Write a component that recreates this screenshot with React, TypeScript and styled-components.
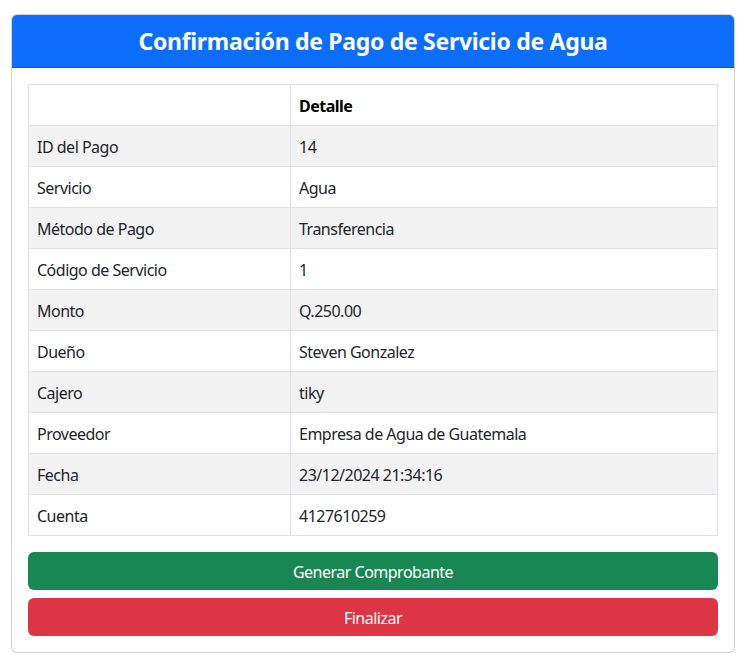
import React from "react";
import styled, { createGlobalStyle } from "styled-components";

const Global = createGlobalStyle`
  html, body { margin: 0; padding: 0; background: #fff; }
  body {
    font-family: "Noto Sans", "Open Sans", sans-serif;
    font-size: 16px;
    line-height: 1.5;
    color: #212529;
    letter-spacing: -0.5px;
  }
  * { box-sizing: border-box; }
`;

const Page = styled.div`
  padding: 14px 10px 10px 11px;
`;

const Card = styled.div`
  width: 724px;
  border: 1px solid rgba(0, 0, 0, 0.175);
  border-radius: 6px;
  overflow: hidden;
  background: #fff;
`;

const Header = styled.div`
  background: #0d6efd;
  color: #fff;
  text-align: center;
  height: 53px;
  display: flex;
  align-items: center;
  justify-content: center;
  padding-top: 2px;
  border-bottom: 1px solid rgba(0, 0, 0, 0.175);
`;

const Title = styled.h3`
  margin: 0;
  font-size: 23px;
  font-weight: 700;
  line-height: 1.2;
  letter-spacing: -0.3px;
`;

const Body = styled.div`
  padding: 16px;
  display: flex;
  flex-direction: column;
`;

const Table = styled.table`
  width: 100%;
  border-collapse: collapse;
  margin-bottom: 16px;
`;

const Row = styled.tr<{ $striped?: boolean }>`
  background: ${(p) => (p.$striped ? "#f2f2f2" : "#fff")};
`;

const Cell = styled.td<{ $head?: boolean }>`
  border: 1px solid #dee2e6;
  padding: 9px 8px 7px;
  height: 41px;
  font-weight: ${(p) => (p.$head ? 700 : 400)};
  color: ${(p) => (p.$head ? "#000" : "#212529")};
  &:first-child { width: 262px; }
`;

const Button = styled.button<{ $color: string }>`
  width: 100%;
  height: 38px;
  border: none;
  border-radius: 6px;
  background: ${(p) => p.$color};
  color: #fff;
  font-family: inherit;
  font-size: 16px;
  letter-spacing: -0.5px;
  padding-top: 2px;
  cursor: pointer;
  & + & { margin-top: 8px; }
`;

const rows: [string, string][] = [
  ["ID del Pago", "14"],
  ["Servicio", "Agua"],
  ["Método de Pago", "Transferencia"],
  ["Código de Servicio", "1"],
  ["Monto", "Q.250.00"],
  ["Dueño", "Steven Gonzalez"],
  ["Cajero", "tiky"],
  ["Proveedor", "Empresa de Agua de Guatemala"],
  ["Fecha", "23/12/2024 21:34:16"],
  ["Cuenta", "4127610259"],
];

export default function App() {
  return (
    <>
      <Global />
      <Page>
        <Card>
          <Header>
            <Title>Confirmación de Pago de Servicio de Agua</Title>
          </Header>
          <Body>
            <Table>
              <tbody>
                <Row>
                  <Cell $head></Cell>
                  <Cell $head>Detalle</Cell>
                </Row>
                {rows.map(([k, v], i) => (
                  <Row key={k} $striped={i % 2 === 0}>
                    <Cell>{k}</Cell>
                    <Cell>{v}</Cell>
                  </Row>
                ))}
              </tbody>
            </Table>
            <Button $color="#198754">Generar Comprobante</Button>
            <Button $color="#dc3545">Finalizar</Button>
          </Body>
        </Card>
      </Page>
    </>
  );
}
